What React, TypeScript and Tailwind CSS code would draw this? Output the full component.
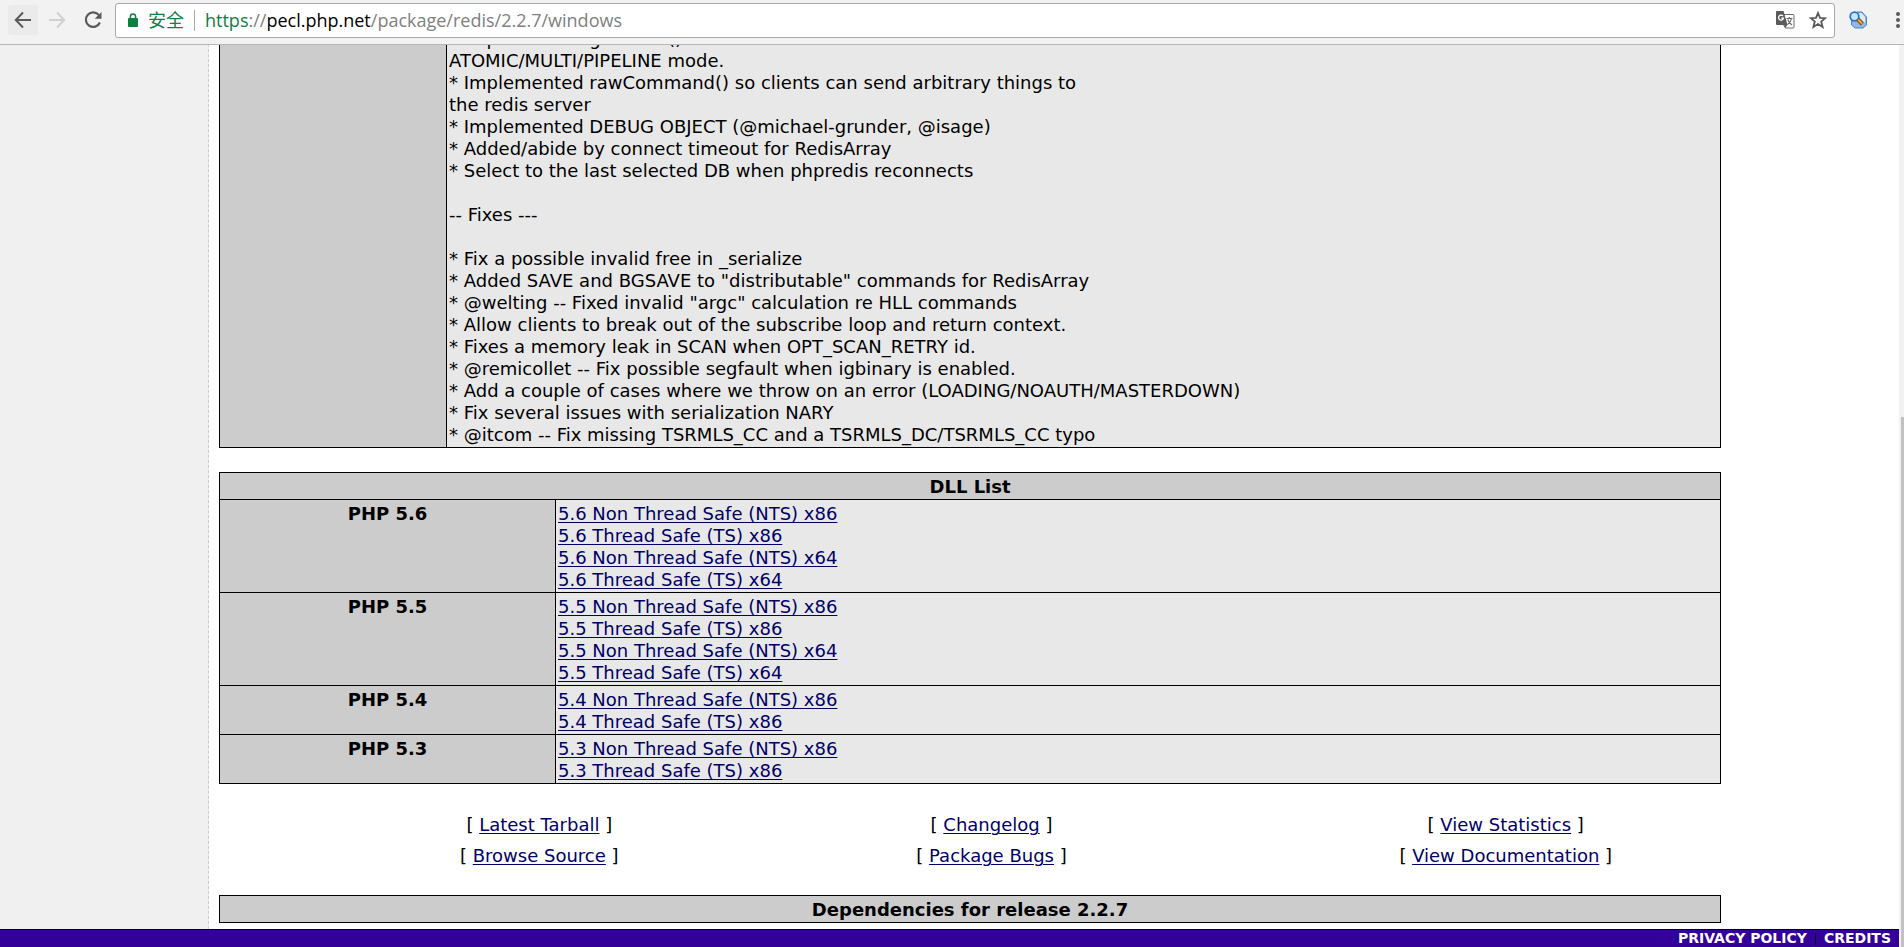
import React from "react";

const changelog = [
  "* Implemented getMode() so clients can detect whether we're in",
  "ATOMIC/MULTI/PIPELINE mode.",
  "* Implemented rawCommand() so clients can send arbitrary things to",
  "the redis server",
  "* Implemented DEBUG OBJECT (@michael-grunder, @isage)",
  "* Added/abide by connect timeout for RedisArray",
  "* Select to the last selected DB when phpredis reconnects",
  "",
  "-- Fixes ---",
  "",
  "* Fix a possible invalid free in _serialize",
  '* Added SAVE and BGSAVE to "distributable" commands for RedisArray',
  '* @welting -- Fixed invalid "argc" calculation re HLL commands',
  "* Allow clients to break out of the subscribe loop and return context.",
  "* Fixes a memory leak in SCAN when OPT_SCAN_RETRY id.",
  "* @remicollet -- Fix possible segfault when igbinary is enabled.",
  "* Add a couple of cases where we throw on an error (LOADING/NOAUTH/MASTERDOWN)",
  "* Fix several issues with serialization NARY",
  "* @itcom -- Fix missing TSRMLS_CC and a TSRMLS_DC/TSRMLS_CC typo",
];

const dlls = [
  { version: "5.6", archs: ["x86", "x64"] },
  { version: "5.5", archs: ["x86", "x64"] },
  { version: "5.4", archs: ["x86"] },
  { version: "5.3", archs: ["x86"] },
];

const linkRows = [
  ["Latest Tarball", "Changelog", "View Statistics"],
  ["Browse Source", "Package Bugs", "View Documentation"],
];

function PageLink({ children }: { children: React.ReactNode }) {
  return (
    <a href="#" className="text-[#000066] underline decoration-1 underline-offset-2">
      {children}
    </a>
  );
}

function Toolbar() {
  return (
    <header className="flex h-[45px] shrink-0 items-center border-b border-[#b6b6b6] bg-[#f2f2f2] pb-1 pl-2">
      <button aria-label="Back" className="flex h-[30px] w-[30px] items-center justify-center rounded-sm bg-[#ebebeb]">
        <svg width="18" height="18" viewBox="0 0 18 18" fill="none" stroke="#5a5a5a" strokeWidth="2">
          <path d="M17 9H2M9 1.5L1.8 9L9 16.5" />
        </svg>
      </button>
      <button aria-label="Forward" disabled className="ml-1 flex h-[30px] w-[30px] items-center justify-center">
        <svg width="18" height="18" viewBox="0 0 18 18" fill="none" stroke="#d0d0d0" strokeWidth="2">
          <path d="M1 9H16M9 1.5L16.2 9L9 16.5" />
        </svg>
      </button>
      <button aria-label="Reload" className="ml-1 flex h-[30px] w-[34px] items-center justify-center">
        <svg width="20" height="20" viewBox="0 0 20 20" fill="none">
          <path d="M16 5.2A7.300 7.300 0 1 0 16.900 12.500" stroke="#5a5a5a" strokeWidth="2.200" />
          <path d="M18.500 2V8.800H11.700Z" fill="#5a5a5a" />
        </svg>
      </button>
      <div className="ml-[5px] flex h-[35px] flex-1 items-center rounded-[3px] border border-[#a9a9a9] bg-white pl-3 pr-[7px] font-['Open_Sans','Noto_Sans_CJK_SC',sans-serif] text-[18px]">
        <svg width="10" height="14" viewBox="0 0 10 14" className="shrink-0">
          <path d="M2.400 6.500V3.600a2.600 2.600 0 0 1 5.200 0v3" fill="none" stroke="#0b8043" strokeWidth="1.500" />
          <rect x="0" y="5" width="10" height="9" rx="1" fill="#0b8043" />
        </svg>
        <span className="ml-2.5 text-[#0b8043]">安全</span>
        <span className="mx-2.5 h-[21px] w-px bg-[#aaa]" />
        <span className="flex-1 whitespace-nowrap text-[#808080]">
          <span className="text-[#0b8043]">https</span>://
          <span className="text-black">pecl.php.net</span>/package/redis/2.2.7/windows
        </span>
        <button aria-label="Translate this page">
          <svg width="19" height="18" viewBox="0 0 19 18">
            <path d="M6 3.500H17a1 1 0 0 1 1 1V16a1 1 0 0 1-1 1H9.500L7 13" fill="#fff" stroke="#6a6a6a" />
            <path d="M1 0H7.500L11.500 14H1a1 1 0 0 1-1-1V1a1 1 0 0 1 1-1Z" fill="#5a5a5a" />
            <path d="M8 13.500H11.500L9.500 17Z" fill="#5a5a5a" />
            <path d="M7 5A2.500 2.500 0 1 0 7.500 7.200H5.200" fill="none" stroke="#fff" strokeWidth="1.300" />
            <path d="M10.500 7.500H16.500M13.300 6V7.500M15.500 7.500C15 10.500 13 12.500 11.500 13.500M11.800 8.500C12.500 11 14.500 13 16 14" fill="none" stroke="#6a6a6a" strokeWidth="1.200" />
          </svg>
        </button>
        <button aria-label="Bookmark this page" className="ml-[14px]">
          <svg width="18" height="18" viewBox="0 0 18 18">
            <path d="M9 2L11 6.900L16.200 7.200L12.200 10.600L13.600 15.900L9 13L4.400 15.900L5.800 10.600L1.800 7.200L7 6.900Z" fill="none" stroke="#5a5a5a" strokeWidth="1.800" />
          </svg>
        </button>
      </div>
      <button aria-label="Page search extension" className="ml-[14px]">
        <svg width="18" height="18" viewBox="0 0 18 18">
          <path d="M8 1H13L17.500 6V14L14 17H6L2.500 14V8Z" fill="#8fb8e6" stroke="#4f83c4" />
          <path d="M9 2H12.500L16 6V12L10 6Z" fill="#dcecfb" />
          <circle cx="5.500" cy="5.500" r="4.300" fill="#bfeaff" stroke="#2f6fdb" strokeWidth="1.800" />
          <path d="M8.800 8.500L13.300 13" stroke="#8a4510" strokeWidth="4" />
          <path d="M9.200 8.800L13 12.600" stroke="#f6b51e" strokeWidth="2" />
        </svg>
      </button>
      <button aria-label="Menu" className="ml-[29px] mr-1">
        <svg width="4" height="18" viewBox="0 0 4 18" fill="#5a5a5a">
          <circle cx="2" cy="3" r="2" />
          <circle cx="2" cy="9" r="2" />
          <circle cx="2" cy="15" r="2" />
        </svg>
      </button>
    </header>
  );
}

export default function App() {
  return (
    <div className="flex h-screen flex-col overflow-hidden bg-white font-['Verdana','DejaVu_Sans',sans-serif] text-[18px] leading-[22px] text-black">
      <Toolbar />
      <div className="flex min-h-0 flex-1">
        <div className="flex min-w-0 flex-1 flex-col justify-end overflow-hidden">
          <div className="flex">
            <aside className="w-[209px] shrink-0 border-r border-dashed border-[#ccc] bg-[#f0f0f0]" />
            <main className="min-w-0 flex-1 pb-[6px] pl-[10px] pr-[11px]">
              <table className="w-[90%] table-fixed border-collapse">
                <tbody>
                  <tr>
                    <th className="w-[227px] border border-black bg-[#ccc]" />
                    <td className="border border-black bg-[#e8e8e8] px-[2px] pb-px pt-[3px]">
                      {changelog.map((line, i) => (
                        <div key={i} className="min-h-[22px]">
                          {line}
                        </div>
                      ))}
                    </td>
                  </tr>
                </tbody>
              </table>

              <table className="mt-6 w-[90%] table-fixed border-collapse">
                <colgroup>
                  <col className="w-[336px]" />
                  <col />
                </colgroup>
                <thead>
                  <tr>
                    <th colSpan={2} className="border border-black bg-[#ccc] px-[2px] pb-px pt-[3px] font-bold">
                      DLL List
                    </th>
                  </tr>
                </thead>
                <tbody>
                  {dlls.map(({ version, archs }) => (
                    <tr key={version}>
                      <th className="border border-black bg-[#ccc] px-[2px] pb-px pt-[3px] align-top font-bold">
                        {`PHP ${version}`}
                      </th>
                      <td className="border border-black bg-[#e8e8e8] px-[2px] pb-px pt-[3px]">
                        {archs.map((arch) => (
                          <React.Fragment key={arch}>
                            <div>
                              <PageLink>{`${version} Non Thread Safe (NTS) ${arch}`}</PageLink>
                            </div>
                            <div>
                              <PageLink>{`${version} Thread Safe (TS) ${arch}`}</PageLink>
                            </div>
                          </React.Fragment>
                        ))}
                      </td>
                    </tr>
                  ))}
                </tbody>
              </table>

              <nav className="mt-[30px] grid grid-cols-[641fr_264fr_765fr] gap-y-[9px] text-center">
                {linkRows.flat().map((label) => (
                  <span key={label} className="whitespace-nowrap">
                    [ <PageLink>{label}</PageLink> ]
                  </span>
                ))}
              </nav>

              <table className="mt-[28px] w-[90%] border-collapse">
                <thead>
                  <tr>
                    <th className="border border-black bg-[#ccc] px-[2px] pb-px pt-[3px] font-bold">
                      Dependencies for release 2.2.7
                    </th>
                  </tr>
                </thead>
              </table>
            </main>
          </div>
          <footer className="flex h-[18px] shrink-0 items-center justify-end border-t border-black bg-[#330099] pr-2 text-[14px] font-bold leading-[17px] text-white">
            <a href="#">PRIVACY POLICY</a>
            <span className="mx-2 h-3 w-px bg-black" />
            <a href="#">CREDITS</a>
          </footer>
        </div>
        <div className="flex w-[5px] flex-col bg-[#f1f1f1] pl-[2px] pt-[372px]">
          <div className="flex-1 bg-[#c1c1c1]" />
        </div>
      </div>
    </div>
  );
}
